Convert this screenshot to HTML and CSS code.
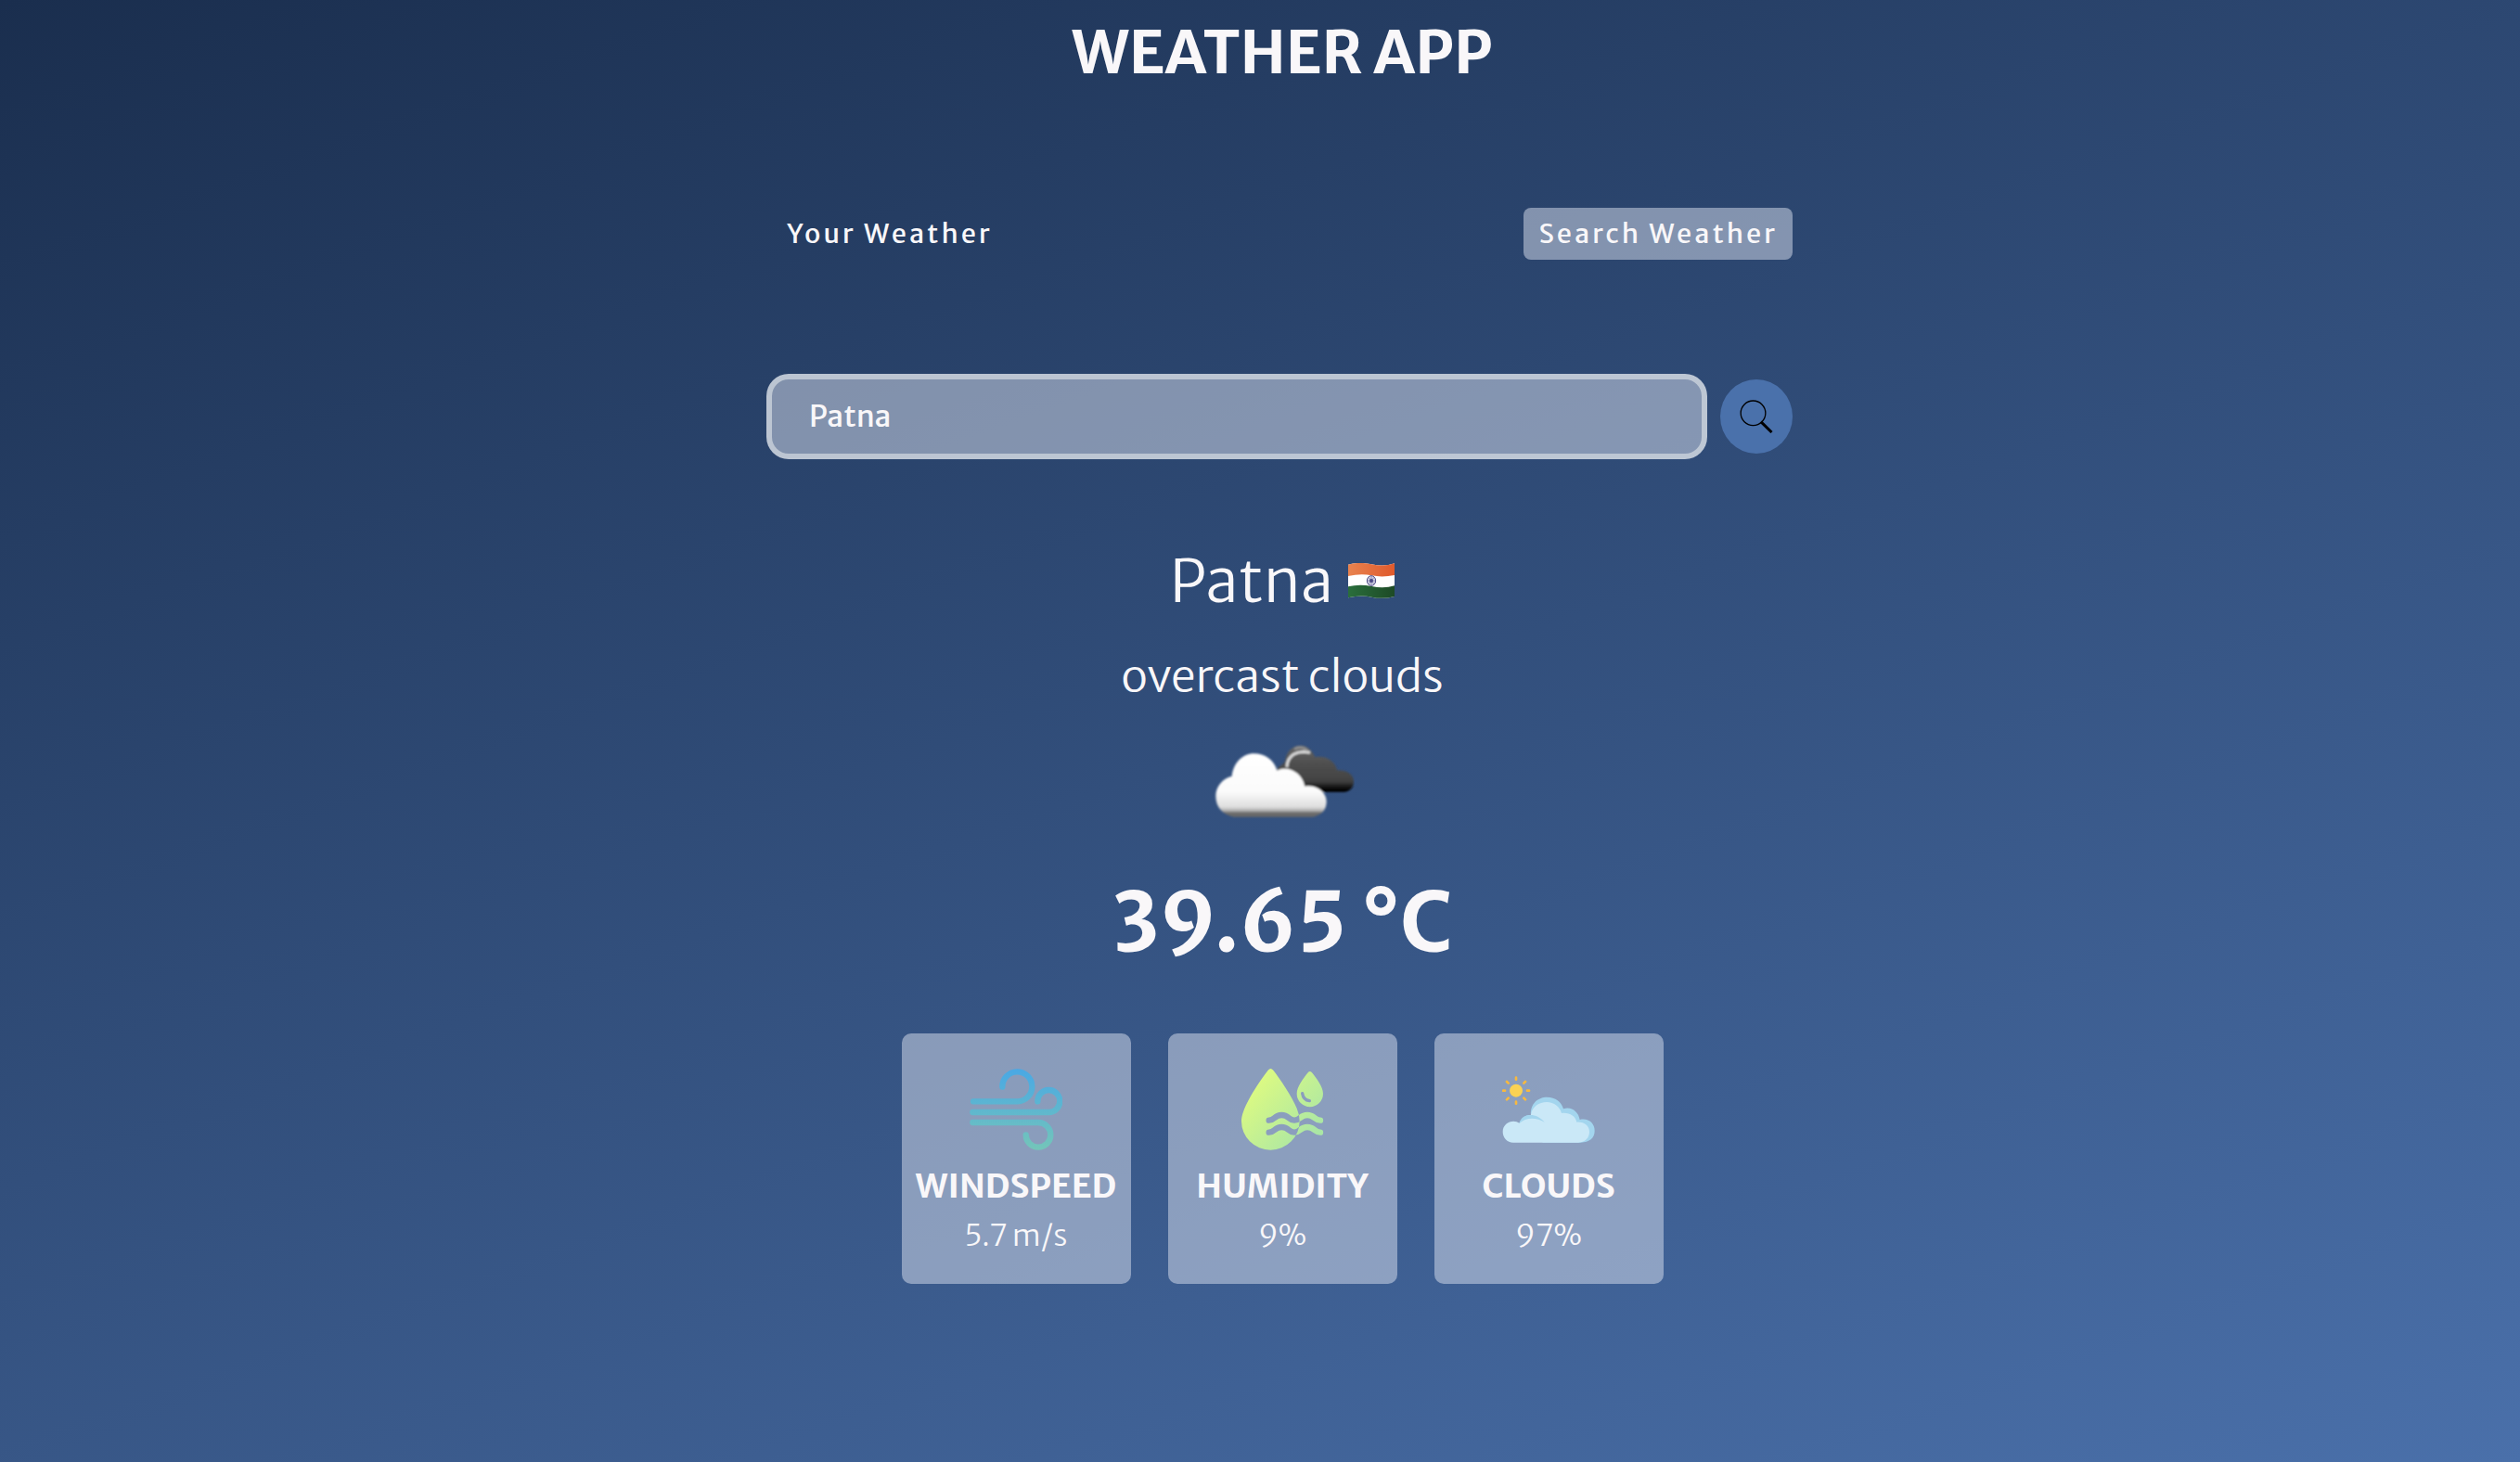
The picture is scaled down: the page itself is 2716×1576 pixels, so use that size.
FILE: index.html
```html
<!DOCTYPE html>
<html lang="en">
<head>
<meta charset="utf-8">
<meta name="viewport" content="width=device-width, initial-scale=1">
<title>Weather App</title>
<link rel="stylesheet" href="styles.css">
</head>
<body>
<main class="wrapper">
  <h1 class="title">WEATHER APP</h1>

  <nav class="tabs">
    <button class="tab" type="button">Your Weather</button>
    <button class="tab tab-current" type="button">Search Weather</button>
  </nav>

  <form class="search">
    <input class="search-input" type="text" aria-label="City" value="Patna">
    <button class="search-button" type="submit" aria-label="Search">
      <svg class="search-icon" viewBox="827 689 105 108" fill="none" stroke="#000">
        <circle cx="869" cy="732" r="40" stroke-width="4"/>
        <path d="M894 760L929 794" stroke-width="9"/>
      </svg>
    </button>
  </form>

  <section class="weather">
    <div class="place">
      <p class="city">Patna</p>
      <svg class="flag" viewBox="819 111 150 114" role="img" aria-label="India">
        <defs>
          <clipPath id="flag-shape"><path d="M819 116Q855 106 895 115T969 112V219Q930 229 895 221T819 223Z"/></clipPath>
          <linearGradient id="flag-top"><stop offset="0" stop-color="#e8834f"/><stop offset="1" stop-color="#e05a2c"/></linearGradient>
          <linearGradient id="flag-bottom"><stop offset="0" stop-color="#2a6e3c"/><stop offset="1" stop-color="#1d4a26"/></linearGradient>
        </defs>
        <g clip-path="url(#flag-shape)">
          <rect x="819" y="105" width="150" height="125" fill="#fff"/>
          <path d="M819 105H969V150Q930 158 895 151T819 153Z" fill="url(#flag-top)"/>
          <path d="M819 187Q855 178 895 186T969 184V230H819Z" fill="url(#flag-bottom)"/>
        </g>
        <ellipse cx="894" cy="168" rx="14" ry="16" fill="#d6d6e6" stroke="#4c4a86" stroke-width="3"/>
        <path d="M894 154V182M881 168H907M885 157L903 179M903 157L885 179" stroke="#6a689c" stroke-width="2"/>
        <circle cx="894" cy="168" r="6" fill="#4c4a86"/>
      </svg>
    </div>
    <p class="description">overcast clouds</p>
    <svg class="sky" viewBox="72 60 468 246" role="img" aria-label="Overcast clouds">
      <defs>
        <linearGradient id="dark-cloud" x1="0" y1="70" x2="0" y2="220" gradientUnits="userSpaceOnUse">
          <stop offset="0" stop-color="#666"/><stop offset=".35" stop-color="#505050"/><stop offset=".75" stop-color="#424242"/><stop offset=".95" stop-color="#000"/>
        </linearGradient>
        <linearGradient id="light-cloud" x1="0" y1="94" x2="0" y2="300" gradientUnits="userSpaceOnUse">
          <stop offset="0" stop-color="#fff"/><stop offset=".6" stop-color="#fbfbfb"/><stop offset=".84" stop-color="#ddd"/><stop offset=".9" stop-color="#aaa"/><stop offset=".93" stop-color="#6c6c6c"/><stop offset="1" stop-color="#666"/>
        </linearGradient>
        <filter id="soft"><feGaussianBlur stdDeviation="3"/></filter>
      </defs>
      <g filter="url(#soft)">
        <path d="M288 150C290 135 305 135 314 120C320 85 340 68 366 68C385 68 402 82 412 106C440 100 474 112 484 148C514 146 537 162 537 184C537 205 524 218 505 218H380Z" fill="url(#dark-cloud)"/>
        <path d="M321 138C322 98 355 82 396 91" fill="none" stroke="#dcdcdc" stroke-width="9"/>
        <path d="M345 80Q365 66 388 84" fill="none" stroke="#909090" stroke-width="8"/>
        <path d="M150 299C112 292 91 266 91 231C91 202 112 174 143 167C148 124 178 94 214 94C250 94 280 115 289 149C325 132 370 155 379 200C415 194 449 218 449 249C449 275 435 292 405 299Z" fill="url(#light-cloud)"/>
      </g>
    </svg>
    <p class="temperature">39.65 °C</p>
  </section>

  <section class="cards">
    <article class="card">
      <svg class="card-icon" viewBox="255 135 300 300" fill="none" stroke="url(#wind)" stroke-width="19" stroke-linecap="round">
        <defs>
          <linearGradient id="wind" x1="0" y1="153" x2="0" y2="416" gradientUnits="userSpaceOnUse"><stop offset="0" stop-color="#49a8e5"/><stop offset="1" stop-color="#74c5b9"/></linearGradient>
        </defs>
        <path d="M361 212A48 48 0 1 1 410 259H267M475 259A36 36 0 1 1 511 294H265M265 327H477A40 40 0 1 1 437 367"/>
      </svg>
      <h2 class="card-label">WINDSPEED</h2>
      <p class="card-value">5.7 m/s</p>
    </article>
    <article class="card">
      <svg class="card-icon" viewBox="276 135 300 300">
        <defs>
          <linearGradient id="water" x1="310" y1="230" x2="500" y2="400" gradientUnits="userSpaceOnUse"><stop offset="0" stop-color="#dcfa82"/><stop offset="1" stop-color="#aae6a5"/></linearGradient>
          <path id="drop" d="M380 158Q388 148 397 158C420 188 456 240 473 281Q482 302 482 323A94 93 0 0 1 294 323C294 287 331 223 380 158Z"/>
          <path id="waves" d="M383 320C402 320 400 303 424 303S446 320 465 320S484 303 507 303S530 320 549 320M383 359C402 359 400 342 424 342S446 359 465 359S484 342 507 342S530 359 549 359" fill="none" stroke-width="19" stroke-linecap="round"/>
          <mask id="inside" maskUnits="userSpaceOnUse" x="276" y="135" width="300" height="300">
            <rect x="276" y="135" width="300" height="300" fill="#fff"/><use href="#waves" stroke="#000"/>
          </mask>
          <mask id="outside" maskUnits="userSpaceOnUse" x="276" y="135" width="300" height="300">
            <rect x="276" y="135" width="300" height="300" fill="#fff"/><use href="#drop" fill="#000"/>
          </mask>
          <mask id="shine" maskUnits="userSpaceOnUse" x="276" y="135" width="300" height="300">
            <rect x="276" y="135" width="300" height="300" fill="#fff"/><path d="M491 233Q494 254 514 257" fill="none" stroke="#000" stroke-width="10" stroke-linecap="round"/>
          </mask>
        </defs>
        <g mask="url(#inside)"><use href="#drop" fill="url(#water)"/></g>
        <g mask="url(#outside)"><use href="#waves" stroke="url(#water)"/></g>
        <path mask="url(#shine)" d="M509 166Q515 158 522 166C536 183 558 212 558 234A42 42 0 0 1 473 234C473 212 495 183 509 166Z" fill="url(#water)"/>
      </svg>
      <h2 class="card-label">HUMIDITY</h2>
      <p class="card-value">9%</p>
    </article>
    <article class="card">
      <svg class="card-icon" viewBox="268 135 300 300">
        <circle cx="313" cy="224" r="21" fill="#fad254"/>
        <path d="M313 182V188M313 260V266M271 224H277M349 224H355M283 195L288 200M338 248L343 253M343 195L338 200M288 248L283 253" stroke="#f8b93f" stroke-width="8" stroke-linecap="round"/>
        <path d="M323 330C330 308 344 303 361 303C358 268 382 245 413 245C440 245 460 260 466 283C492 274 515 293 519 318C548 312 567 330 567 354C567 378 550 391 522 392H400Z" fill="#a3d5ee"/>
        <path d="M304 392C284 392 270 376 270 357C270 336 287 323 305 323Q315 323 324 329C334 311 345 308 361 302C365 276 387 261 412 261C436 261 455 276 460 297C485 294 505 306 509 326C533 324 550 338 550 357C550 378 535 391 514 392Z" fill="#cae8f7"/>
        <path d="M323 330C334 298 375 292 405 326C378 310 345 310 323 330Z" fill="#a3d5ee"/>
      </svg>
      <h2 class="card-label">CLOUDS</h2>
      <p class="card-value">97%</p>
    </article>
  </section>
</main>
</body>
</html>
```
FILE: styles.css
```css
* {
  box-sizing: border-box;
  margin: 0;
  padding: 0;
}

body {
  min-height: 100vh;
  color: #f9f7f9;
  font-family: "Merriweather Sans", "Noto Sans", sans-serif;
  font-weight: 350;
  background: linear-gradient(160deg, #1a2e4e 0%, #4a70aa 100%);
}

button,
input {
  border: 0;
  color: inherit;
  font: inherit;
}

.wrapper {
  display: flex;
  flex-direction: column;
  align-items: center;
  padding: 16px 0 48px 48px;
}

.title {
  font-size: 64px;
  font-weight: 700;
  line-height: 80px;
}

.tabs {
  display: flex;
  justify-content: space-between;
  width: 100%;
  max-width: 1100px;
  margin-top: 128px;
}

.tab {
  padding: 8px 16px;
  border-radius: 8px;
  background: none;
  font-size: 29px;
  font-weight: 500;
  line-height: 40px;
  letter-spacing: 3px;
  cursor: pointer;
}

.tab-current {
  background: rgba(219, 226, 239, 0.5);
}

.search {
  display: flex;
  align-items: center;
  gap: 14px;
  width: 100%;
  max-width: 1106px;
  margin: 123px 6px 0 0;
}

.search-input {
  flex: 1;
  min-width: 0;
  padding: 20px 40px;
  border: 6px solid rgba(219, 226, 230, 0.65);
  border-radius: 24px;
  outline: 0;
  background: rgba(219, 226, 239, 0.5);
  font-size: 32px;
  font-weight: 500;
  line-height: 40px;
}

.search-button {
  display: grid;
  place-items: center;
  width: 78px;
  height: 80px;
  border-radius: 50%;
  background: #4a71ab;
  cursor: pointer;
}

.search-icon {
  width: 36px;
  height: 36px;
}

.weather {
  display: flex;
  flex-direction: column;
  align-items: center;
  margin-top: 91px;
}

.place {
  display: flex;
  align-items: center;
  gap: 16px;
}

.city {
  font-size: 64px;
  line-height: 80px;
}

.flag {
  width: 50px;
  height: 38px;
}

.description {
  margin-top: 31px;
  font-size: 48px;
  line-height: 64px;
}

.sky {
  width: 156px;
  height: 82px;
  margin-top: 40px;
}

.temperature {
  margin-top: 56px;
  font-size: 88px;
  font-weight: 700;
  line-height: 112px;
}

.cards {
  display: flex;
  flex-wrap: wrap;
  justify-content: center;
  gap: 40px;
  margin-top: 63px;
}

.card {
  display: flex;
  flex-direction: column;
  align-items: center;
  width: 247px;
  padding: 32px 0 28px;
  border-radius: 10px;
  background: rgba(219, 226, 239, 0.5);
}

.card-icon {
  width: 100px;
  height: 100px;
}

.card-label {
  margin-top: 9px;
  font-size: 36px;
  font-weight: 700;
  line-height: 48px;
}

.card-value {
  margin-top: 5px;
  font-size: 32px;
  line-height: 48px;
}
```
